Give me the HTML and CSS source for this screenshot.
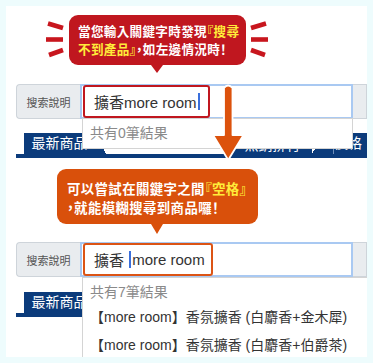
FILE: index.html
```html
<!DOCTYPE html>
<html lang="zh-Hant">
<head>
<meta charset="utf-8">
<title>搜尋說明</title>
<link rel="stylesheet" href="styles.css">
</head>
<body>
<div class="card">
  <div class="callout">
    <svg class="rays" viewBox="0 0 20 40" width="20" height="40">
      <line x1="3" y1="3.5" x2="18" y2="8" />
      <line x1="1" y1="19.5" x2="18" y2="19.5" />
      <line x1="4" y1="35" x2="18" y2="30" />
    </svg>
    <div class="bubble bubble-red">當您輸入關鍵字時發現<em>『搜尋</em><br><em>不到產品』</em>，如左邊情況時！</div>
    <svg class="rays rays-right" viewBox="0 0 20 40" width="20" height="40">
      <line x1="3" y1="3.5" x2="18" y2="8" />
      <line x1="1" y1="19.5" x2="18" y2="19.5" />
      <line x1="4" y1="35" x2="18" y2="30" />
    </svg>
  </div>

  <div class="demo demo-1">
    <div class="search-row">
      <div class="label">搜索說明</div>
      <div class="input"><span class="kw kw-red">擴香more room<i class="caret"></i></span></div>
      <div class="btn"></div>
      <div class="dropdown dd-1"><div class="count">共有0筆結果</div></div>
    </div>
    <div class="tabs">
      <div class="tab-sp"></div>
      <div class="tab tab-navy tab-1">最新商品</div>
      <div class="tab tab-white"></div>
      <div class="tab tab-navy tab-3">熱銷排行</div>
      <div class="tab tab-notch"></div>
      <div class="tab tab-navy tab-4">價格</div>
    </div>
  </div>

  <div class="callout callout-2">
    <div class="bubble bubble-orange">可以嘗試在關鍵字之間<em>『空格』</em><br>，就能模糊搜尋到商品囉！</div>
  </div>

  <div class="demo demo-2">
    <div class="search-row">
      <div class="label">搜索說明</div>
      <div class="input"><span class="kw kw-orange">擴香 <i class="caret"></i>more room</span></div>
      <div class="btn"></div>
      <div class="dropdown dd-2">
        <div class="count">共有7筆結果</div>
        <div class="item">【more room】香氛擴香 (白麝香+金木犀)</div>
        <div class="item">【more room】香氛擴香 (白麝香+伯爵茶)</div>
      </div>
    </div>
    <div class="tabs">
      <div class="tab-sp"></div>
      <div class="tab tab-navy tab-1">最新商品</div>
      <div class="tab tab-white"></div>
      <div class="tab tab-navy tab-3"></div>
      <div class="tab tab-notch"></div>
      <div class="tab tab-navy tab-4"></div>
    </div>
  </div>

  <svg class="arrow" viewBox="0 0 33 80" width="33" height="80">
    <path d="M12 5 Q16 0 20.5 5 L20.5 52 L31.5 52 L16.2 77 L1 52 L12 52 Z" />
  </svg>
</div>
</body>
</html>
```

FILE: styles.css
```css
html, body {
  margin: 0;
  padding: 0;
}
body {
  background: #eefcfd;
  font-family: "Liberation Sans", "Noto Sans CJK TC", sans-serif;
  color: #333;
}
.card {
  position: relative;
  margin: 6px;
  width: 361px;
  height: 351px;
  background: #fff;
  overflow: hidden;
}

/* callouts */
.callout {
  display: flex;
  align-items: center;
  padding-top: 9px;
  margin-left: 39px;
}
.rays {
  display: block;
  flex: none;
}
.rays line {
  stroke: #c8161e;
  stroke-width: 4.6;
}
.rays-right {
  transform: scaleX(-1);
  margin-left: 3px;
}
.bubble {
  position: relative;
  flex: none;
  box-sizing: border-box;
  color: #fff;
  font-family: "Noto Sans CJK TC", sans-serif;
  font-weight: 700;
  font-feature-settings: "palt";
  white-space: nowrap;
  border-radius: 9px;
}
.bubble em {
  font-style: normal;
  color: #ffec3a;
}
.bubble::after {
  content: "";
  position: absolute;
  top: 100%;
  border-left: 6px solid transparent;
  border-right: 6px solid transparent;
}
.bubble-red {
  margin-left: 4px;
  width: 177px;
  height: 50px;
  padding: 7px 0 0 9px;
  background: #c0171f;
  font-size: 12.6px;
  line-height: 17.5px;
  letter-spacing: 0.3px;
}
.bubble-red::after {
  left: 82px;
  border-top: 8px solid #c0171f;
}
.callout-2 {
  padding-top: 11px;
  margin-left: 51px;
}
.bubble-orange {
  width: 201px;
  height: 55px;
  padding: 10px 0 0 10px;
  background: #d9500b;
  font-size: 13.4px;
  line-height: 19px;
  letter-spacing: 0.4px;
}
.bubble-orange::after {
  left: 94px;
  border-top: 10px solid #d9500b;
}

/* demo search blocks */
.demo {
  margin-left: 10px;
}
.demo-1 {
  margin-top: 19px;
}
.demo-2 {
  margin-top: 18px;
}
.search-row {
  position: relative;
  display: flex;
  height: 35px;
}
.label {
  box-sizing: border-box;
  width: 64px;
  height: 35px;
  display: flex;
  align-items: center;
  justify-content: center;
  background: #e9ecef;
  border: 1px solid #ced4da;
  border-right: none;
  border-radius: 4px 0 0 4px;
  font-size: 11px;
  color: #555;
}
.input {
  box-sizing: border-box;
  width: 273px;
  height: 35px;
  display: flex;
  align-items: center;
  background: #fff;
  border: 2px solid #a9c9f2;
}
.kw {
  box-sizing: border-box;
  display: flex;
  align-items: center;
  height: 33px;
  margin-left: 1px;
  padding-left: 9px;
  border-radius: 3px;
  font-size: 15px;
  color: #333;
  white-space: pre;
}
.kw-red {
  width: 127px;
  border: 2px solid #c0171f;
}
.kw-orange {
  width: 130px;
  border: 2px solid #dc5415;
}
.caret {
  display: inline-block;
  width: 2px;
  height: 17px;
  margin: 0 1px;
  background: #3a6fdc;
}
.btn {
  flex: 1;
  box-sizing: border-box;
  height: 35px;
  background: #e9ecef;
  border: 1px solid #ced4da;
  border-left: none;
}
.dropdown {
  position: absolute;
  left: 66px;
  top: 34px;
  box-sizing: border-box;
  background: #fff;
  border: 1px solid #d4d4d4;
  z-index: 2;
}
.dd-1 {
  width: 271px;
  height: 31px;
  padding: 3px 0 0 7px;
}
.dd-2 {
  top: 35px;
  width: 300px;
  height: 120px;
  padding: 3px 0 0 7px;
  border-right: none;
}
.count {
  font-size: 14px;
  line-height: 22px;
  color: #8a8a8a;
}
.item {
  font-size: 14px;
  line-height: 28px;
  color: #333;
  white-space: nowrap;
}

/* tabs */
.tabs {
  display: flex;
  height: 21px;
  margin-top: 14px;
  border-bottom: 4px solid #0b3b7b;
}
.demo-2 .tabs {
  margin-top: 15px;
}
.tab-sp {
  width: 8px;
}
.tab {
  height: 21px;
  font-size: 14px;
  line-height: 21px;
  color: #fff;
  white-space: nowrap;
  overflow: hidden;
}
.tab-navy {
  background: #0b3b7b;
}
.tab-1 {
  width: 71px;
  text-align: center;
}
.tab-white {
  width: 138px;
  background: linear-gradient(to top right, #0b3b7b 50%, #fff 50%) left top / 11px 100% no-repeat, #fff;
}
.tab-3 {
  width: 79px;
  text-align: center;
  line-height: 24px;
}
.tab-notch {
  width: 12px;
  background: linear-gradient(to top left, #0b3b7b 50%, #fff 50%);
}
.tab-4 {
  flex: 1;
  box-sizing: border-box;
  padding-left: 7px;
  border-left: 1px solid #0b3b7b;
  box-shadow: inset 8px 0 0 #0b3b7b, inset 9px 0 0 #6f8fbb;
  text-indent: 2px;
}

/* arrow overlay */
.arrow {
  position: absolute;
  left: 206px;
  top: 77px;
  z-index: 3;
}
.arrow path {
  fill: #dc520d;
  stroke: #fff;
  stroke-width: 1.8;
  stroke-linejoin: round;
}
```
